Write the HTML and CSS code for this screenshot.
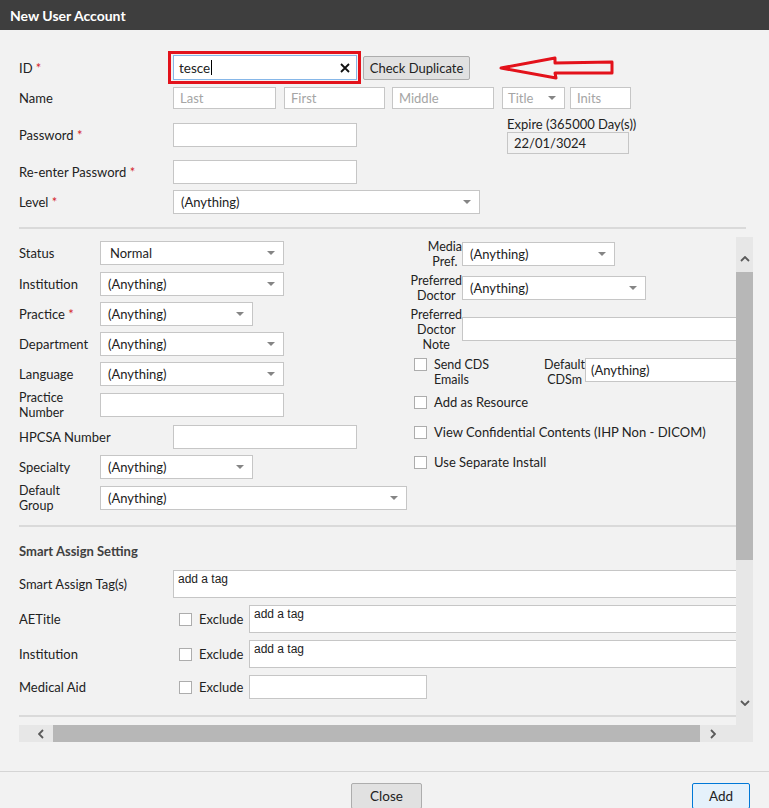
FILE: index.html
```html
<!DOCTYPE html>
<html lang="en">
<head>
    <meta charset="UTF-8">
    <title>New User Account</title>
    <link rel="stylesheet" href="styles.css">
</head>
<body>
    <div class="titlebar">New User Account</div>

    <div class="top">
        <div class="row row-id">
            <div class="lbl lbl-id">ID <span class="req">*</span></div>
            <div class="mark">
                <div class="field field-id">
                    <span>tesce</span><span class="caret"></span>
                    <svg class="clear" width="10" height="10" viewBox="0 0 10 10"><path d="M1 1 L9 9 M9 1 L1 9"/></svg>
                </div>
            </div>
            <button class="btn btn-check" type="button">Check Duplicate</button>
            <svg class="arrow" width="118" height="26" viewBox="0 0 118 26">
                <polygon points="3,13 57,3 57,8 114,7 114,18 57,18 58,23"/>
            </svg>
        </div>

        <div class="row row-name">
            <div class="lbl">Name</div>
            <input class="field w-last" placeholder="Last">
            <input class="field w-first" placeholder="First">
            <input class="field w-middle" placeholder="Middle">
            <div class="select w-title ph"><span>Title</span><i class="tri"></i></div>
            <input class="field w-inits" placeholder="Inits">
        </div>

        <div class="pw-block">
            <div>
                <div class="row">
                    <div class="lbl">Password <span class="req">*</span></div>
                    <input class="field w-184" type="password">
                </div>
                <div class="row row-pw2">
                    <div class="lbl">Re-enter Password <span class="req">*</span></div>
                    <input class="field w-184" type="password">
                </div>
            </div>
            <div class="expire">
                <div class="expire-lbl">Expire (365000 Day(s))</div>
                <div class="expire-box">22/01/3024</div>
            </div>
        </div>

        <div class="row row-level">
            <div class="lbl">Level <span class="req">*</span></div>
            <div class="select w-307"><span>(Anything)</span><i class="tri"></i></div>
        </div>

        <div class="sep sep-top"></div>
    </div>

    <div class="panel">
        <div class="viewport">
            <div class="content">
                <div class="mid">
                    <div class="col-left">
                        <div class="frow">
                            <div class="flbl">Status</div>
                            <div class="select w-184 pad9"><span>Normal</span><i class="tri"></i></div>
                        </div>
                        <div class="frow g7">
                            <div class="flbl">Institution</div>
                            <div class="select w-184"><span>(Anything)</span><i class="tri"></i></div>
                        </div>
                        <div class="frow">
                            <div class="flbl">Practice <span class="req">*</span></div>
                            <div class="select w-153"><span>(Anything)</span><i class="tri"></i></div>
                        </div>
                        <div class="frow">
                            <div class="flbl">Department</div>
                            <div class="select w-184"><span>(Anything)</span><i class="tri"></i></div>
                        </div>
                        <div class="frow">
                            <div class="flbl">Language</div>
                            <div class="select w-184"><span>(Anything)</span><i class="tri"></i></div>
                        </div>
                        <div class="frow g7">
                            <div class="flbl two">Practice<br>Number</div>
                            <input class="field w-184">
                        </div>
                        <div class="frow g8">
                            <div class="flbl wide">HPCSA Number</div>
                            <input class="field w-184">
                        </div>
                        <div class="frow">
                            <div class="flbl">Specialty</div>
                            <div class="select w-153"><span>(Anything)</span><i class="tri"></i></div>
                        </div>
                        <div class="frow g7">
                            <div class="flbl two">Default<br>Group</div>
                            <div class="select w-307"><span>(Anything)</span><i class="tri"></i></div>
                        </div>
                    </div>

                    <div class="col-right">
                        <div class="rrow">
                            <div class="rlbl two"><span>Media<br>Pref.</span></div>
                            <div class="select w-153"><span>(Anything)</span><i class="tri"></i></div>
                        </div>
                        <div class="rrow r10">
                            <div class="rlbl two"><span>Preferred<br>Doctor</span></div>
                            <div class="select w-184"><span>(Anything)</span><i class="tri"></i></div>
                        </div>
                        <div class="rrow r17">
                            <div class="rlbl two"><span>Preferred<br>Doctor<br>Note</span></div>
                            <input class="field w-note">
                        </div>
                        <div class="rrow r17">
                            <div class="cds">
                                <div class="cb-group">
                                    <span class="cb"></span>
                                    <span class="cb-text two">Send CDS<br>Emails</span>
                                </div>
                                <div class="center-lbl two">Default<br>CDSm</div>
                            </div>
                            <div class="select w-cdsm"><span>(Anything)</span></div>
                        </div>
                        <div class="rrow r8 check">
                            <span class="cb"></span><span>Add as Resource</span>
                        </div>
                        <div class="rrow check">
                            <span class="cb"></span><span>View Confidential Contents (IHP Non - DICOM)</span>
                        </div>
                        <div class="rrow check">
                            <span class="cb"></span><span>Use Separate Install</span>
                        </div>
                    </div>
                </div>

                <div class="sep sep-mid"></div>

                <div class="smart">
                    <div class="smart-title">Smart Assign Setting</div>
                    <div class="srow">
                        <div class="slbl">Smart Assign Tag(s)</div>
                        <div class="tags tags-full">add a tag</div>
                    </div>
                    <div class="srow">
                        <div class="slbl">AETitle</div>
                        <span class="cb"></span><span class="excl">Exclude</span>
                        <div class="tags tags-ex">add a tag</div>
                    </div>
                    <div class="srow">
                        <div class="slbl">Institution</div>
                        <span class="cb"></span><span class="excl">Exclude</span>
                        <div class="tags tags-ex">add a tag</div>
                    </div>
                    <div class="srow srow-short">
                        <div class="slbl">Medical Aid</div>
                        <span class="cb"></span><span class="excl">Exclude</span>
                        <input class="field w-aid">
                    </div>
                </div>

                <div class="sep sep-bottom"></div>
            </div>
        </div>

        <div class="vscroll">
            <svg class="chev chev-up" width="10" height="6" viewBox="0 0 10 6"><path d="M1 5 L5 1 L9 5"/></svg>
            <div class="vthumb"></div>
            <svg class="chev chev-down" width="10" height="6" viewBox="0 0 10 6"><path d="M1 1 L5 5 L9 1"/></svg>
        </div>

        <div class="hscroll">
            <svg class="chev chev-left" width="6" height="10" viewBox="0 0 6 10"><path d="M5 1 L1 5 L5 9"/></svg>
            <div class="hthumb"></div>
            <svg class="chev chev-right" width="6" height="10" viewBox="0 0 6 10"><path d="M1 1 L5 5 L1 9"/></svg>
        </div>
        <div class="corner"></div>
    </div>

    <div class="footer">
        <span></span>
        <button class="btn btn-close" type="button">Close</button>
        <button class="btn btn-add" type="button">Add</button>
    </div>
</body>
</html>
```

FILE: styles.css
```css
* {
    box-sizing: border-box;
}

body {
    margin: 0;
    background-color: #f2f2f2;
    font-family: Lato, "Open Sans", sans-serif;
    font-size: 13px;
    color: #222;
    overflow: hidden;
}

.titlebar {
    height: 30px;
    background-color: #3e3e3e;
    color: #fff;
    font-weight: bold;
    font-size: 14px;
    padding-left: 10px;
    display: flex;
    align-items: center;
}

.req {
    color: #d4262c;
}

/* basic controls */
.field {
    display: block;
    height: 24px;
    margin: 0;
    padding: 0 6px;
    background-color: #fff;
    border: 1px solid #c6c6c6;
    font: inherit;
    color: #222;
    outline: none;
}

.field::placeholder {
    color: #a5a5a5;
}

.select {
    height: 24px;
    display: flex;
    align-items: center;
    justify-content: space-between;
    padding: 0 8px 0 7px;
    background-color: #fff;
    border: 1px solid #c6c6c6;
    white-space: nowrap;
}

.select.pad9 {
    padding-left: 9px;
}

.select.ph {
    color: #a5a5a5;
}

.tri {
    width: 0;
    height: 0;
    border-left: 4px solid transparent;
    border-right: 4px solid transparent;
    border-top: 4px solid #858585;
}

.btn {
    height: 24px;
    padding: 0;
    background-color: #e1e1e1;
    border: 1px solid #adadad;
    border-radius: 2px;
    font: inherit;
    color: #222;
}

.cb {
    flex: none;
    width: 13px;
    height: 13px;
    background-color: #fff;
    border: 1px solid #adadad;
}

/* labels that wrap over two or three lines */
.two {
    font-size: 12.5px;
    line-height: 15px;
}

.sep {
    height: 2px;
    background-color: #dadada;
}

.w-184 { width: 184px; }
.w-153 { width: 153px; }
.w-307 { width: 307px; }

/* top form */
.top {
    padding: 21px 0 0 19px;
}

.row {
    display: flex;
    align-items: center;
}

.lbl {
    flex: none;
    width: 154px;
}

.lbl-id {
    width: 149px;
}

.mark {
    width: 193px;
    height: 33px;
    padding: 1px 1px 1px 2px;
    border: 3px solid #e3121b;
}

.field-id {
    height: 25px;
    width: 184px;
    display: flex;
    align-items: center;
    padding: 0 6px 0 5px;
    border-color: #86b7e8;
    font-size: 13.5px;
}

.caret {
    width: 1px;
    height: 15px;
    margin-left: 1px;
    background-color: #000;
}

.clear {
    margin-left: auto;
    stroke: #111;
    stroke-width: 1.8;
}

.btn-check {
    width: 107px;
    margin-left: 2px;
}

.arrow {
    margin-left: 28px;
    fill: none;
    stroke: #e3121b;
    stroke-width: 3;
    stroke-linejoin: round;
}

.row-name {
    margin-top: 3px;
}

.row-name .field,
.row-name .select {
    height: 22px;
}

.w-last { width: 103px; }
.w-first { width: 101px; margin-left: 8px; }
.w-middle { width: 102px; margin-left: 7px; }
.w-title { width: 63px; margin-left: 8px; padding-left: 5px; }
.w-inits { width: 61px; margin-left: 5px; }

.pw-block {
    display: flex;
    align-items: flex-start;
    margin-top: 14px;
}

.row-pw2 {
    margin-top: 13px;
}

.expire {
    margin: -6px 0 0 150px;
}

.expire-lbl {
    line-height: 14px;
    white-space: nowrap;
}

.expire-box {
    width: 122px;
    height: 22px;
    margin-top: 1px;
    padding-left: 6px;
    line-height: 20px;
    border: 1px solid #c6c6c6;
}

.row-level {
    margin-top: 6px;
}

.sep-top {
    width: 727px;
    margin-top: 13px;
}

/* scroll panel */
.panel {
    display: grid;
    grid-template-columns: 717px 17px;
    grid-template-rows: 488px 17px;
    margin: 8px 0 0 19px;
}

.viewport {
    overflow: hidden;
}

.content {
    width: 760px;
}

.mid {
    display: flex;
    padding-top: 4px;
}

.col-left {
    flex: none;
    width: 389px;
}

.frow {
    display: flex;
    align-items: center;
    height: 24px;
    margin-top: 6px;
}

.frow:first-child {
    margin-top: 0;
}

.frow.g7 { margin-top: 7px; }
.frow.g8 { margin-top: 8px; }

.flbl {
    flex: none;
    width: 81px;
}

.flbl.wide {
    width: 154px;
}

.col-right {
    flex: 1;
    padding-top: 1px;
}

.rrow {
    display: flex;
    align-items: center;
    height: 24px;
    margin-top: 6px;
}

.rrow:first-child {
    margin-top: 0;
}

.rrow.r10 { margin-top: 10px; }
.rrow.r17 { margin-top: 17px; }
.rrow.r8 { margin-top: 8px; }

.rlbl {
    flex: none;
    width: 54px;
    display: flex;
    justify-content: flex-end;
    text-align: center;
    white-space: nowrap;
}

.w-note { width: 300px; }

.cds {
    flex: none;
    width: 177px;
    display: flex;
    justify-content: space-between;
    align-items: center;
    padding-left: 6px;
}

.cb-group {
    display: flex;
    align-items: flex-start;
    margin-top: 3px;
}

.cb-group .cb {
    margin-top: 1px;
}

.cb-text {
    margin-left: 7px;
}

.center-lbl {
    text-align: center;
    margin-top: 4px;
}

.w-cdsm {
    width: 200px;
    padding-left: 5px;
}

.check {
    padding-left: 6px;
}

.check .cb {
    margin-right: 7px;
}

.sep-mid {
    margin-top: 15px;
}

.smart-title {
    margin-top: 16px;
    line-height: 16px;
    font-weight: bold;
    color: #404040;
}

.srow {
    display: flex;
    align-items: center;
    height: 28px;
    margin-top: 7px;
}

.smart-title + .srow {
    margin-top: 11px;
}

.srow-short {
    height: 24px;
}

.slbl {
    flex: none;
    width: 154px;
}

.srow .cb {
    margin-left: 6px;
}

.excl {
    width: 50px;
    margin-left: 7px;
}

.tags {
    align-self: stretch;
    padding: 1px 4px;
    background-color: #fff;
    border: 1px solid #c6c6c6;
    font-family: "Liberation Sans", Arial, sans-serif;
    font-size: 12px;
    color: #222;
}

.tags-full { width: 587px; }
.tags-ex { width: 511px; }

.w-aid { width: 178px; }

.sep-bottom {
    margin-top: 16px;
}

.chev {
    fill: none;
    stroke: #5a5a5a;
    stroke-width: 1.8;
}

.vscroll {
    background-color: #e7e7e7;
    display: flex;
    flex-direction: column;
    align-items: center;
}

.chev-up {
    margin-top: 19px;
}

.vthumb {
    width: 17px;
    height: 288px;
    margin-top: 10px;
    background-color: #b7b7b7;
}

.chev-down {
    margin: auto 0 19px;
}

.hscroll {
    background-color: #e7e7e7;
    display: flex;
    align-items: center;
}

.chev-left {
    margin-left: 19px;
}

.hthumb {
    width: 647px;
    height: 17px;
    margin-left: 9px;
    background-color: #b7b7b7;
}

.chev-right {
    margin-left: 10px;
}

.corner {
    background-color: #e7e7e7;
}

/* footer */
.footer {
    display: grid;
    grid-template-columns: 1fr auto 1fr;
    margin-top: 29px;
    padding: 11px 19px 0 23px;
    border-top: 1px solid #d5d5d5;
}

.btn-close {
    width: 71px;
    height: 26px;
    font-size: 13.5px;
}

.btn-add {
    justify-self: end;
    width: 58px;
    height: 26px;
    font-size: 13.5px;
    background-color: #e5f1fb;
    border-color: #0078d7;
}
```
